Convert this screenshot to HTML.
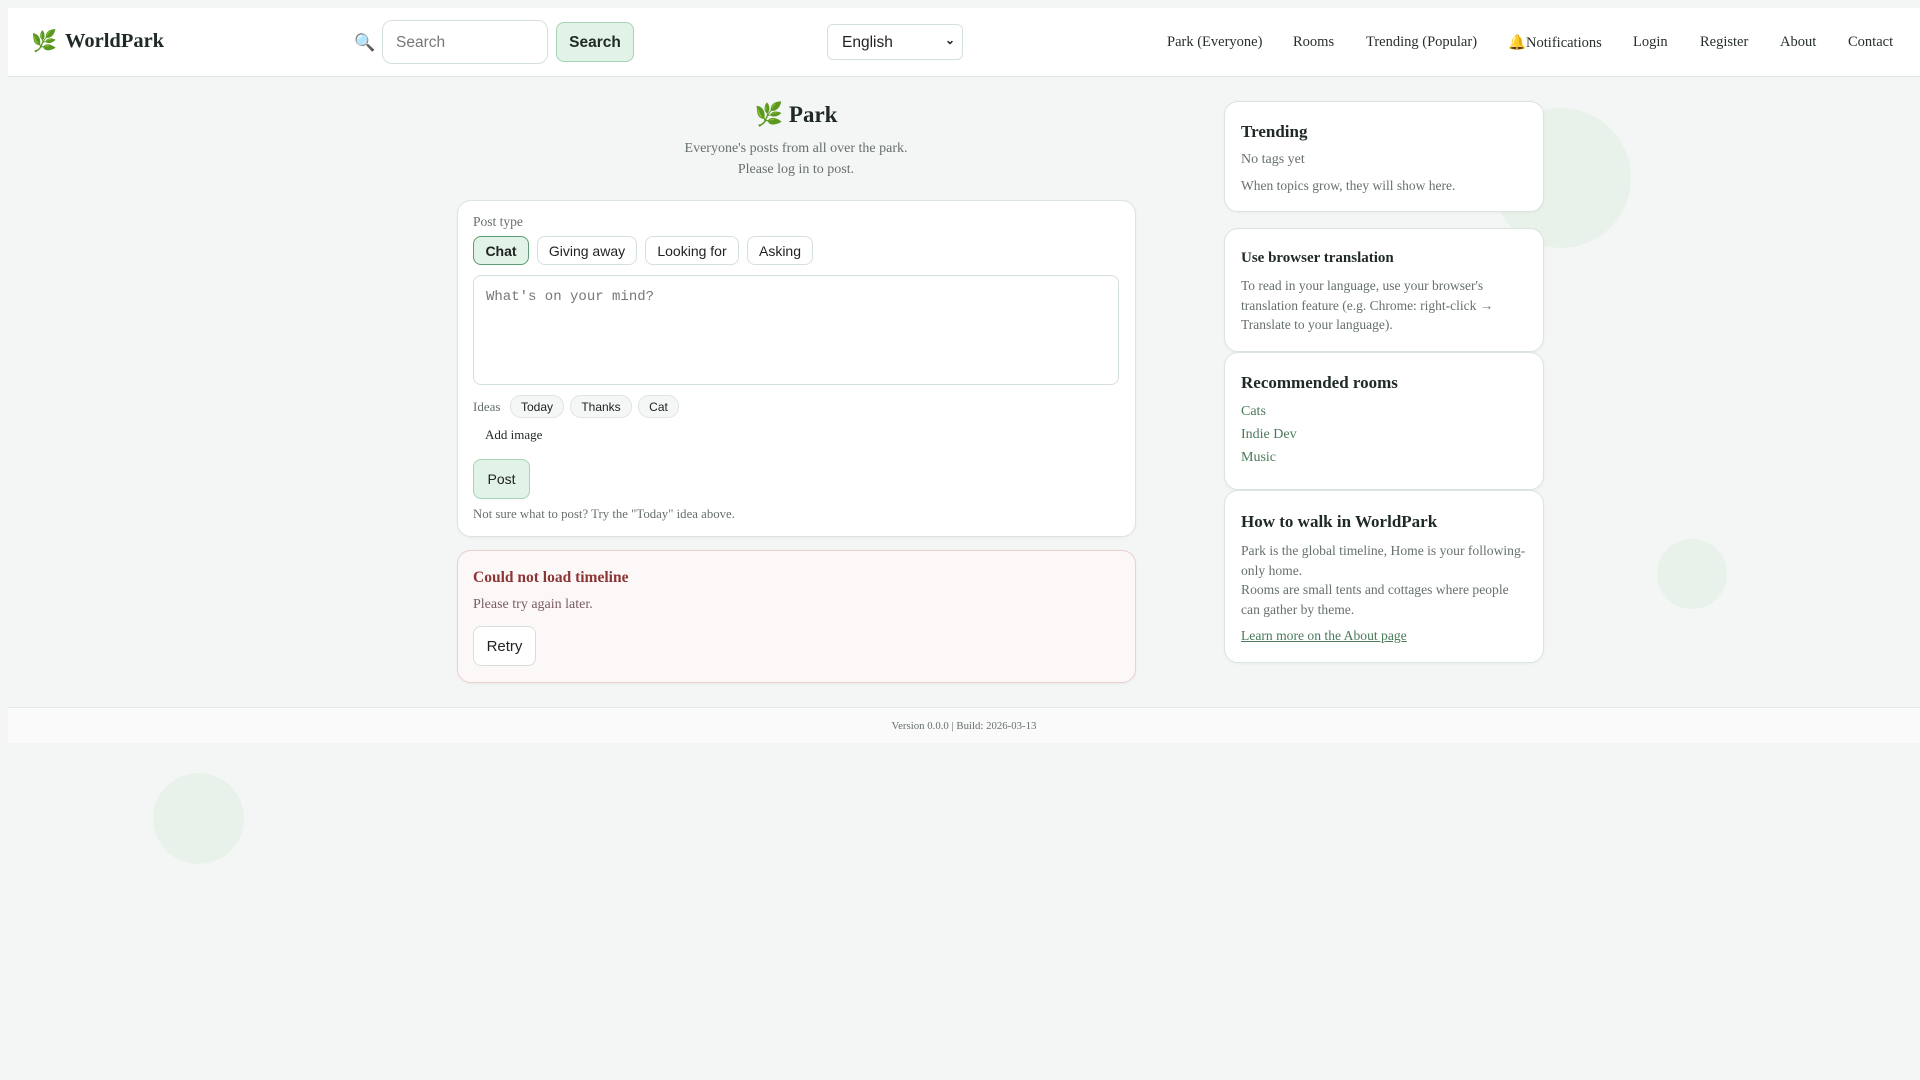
<!DOCTYPE html>
<html><head><meta charset="utf-8"><style>
*{box-sizing:border-box}
body{margin:0;width:1920px;height:1080px;background:#f4f6f5;font-family:"Liberation Serif",serif;color:#1f2a24;position:relative;overflow:hidden}
.a{position:absolute}
.circ{position:absolute;border-radius:50%;background:#e8f2ea}
header{position:absolute;left:8px;top:8px;width:1912px;height:69px;background:#fff;border-bottom:1px solid #dde5e1}
.nav{position:absolute;top:34px;font-size:14.5px;color:#26302b;white-space:nowrap}
.card{position:absolute;background:#fff;border:1px solid #dbe4df;border-radius:14px;box-shadow:0 1px 3px rgba(0,0,0,.04)}
.sans{font-family:"Liberation Sans",sans-serif}
.btn{position:absolute;border:1px solid #d6e0db;border-radius:8px;background:#fff;font-family:"Liberation Sans",sans-serif;font-size:14px;display:flex;align-items:center;justify-content:center;color:#222}
.chip{position:absolute;border:1px solid #dfe5e2;border-radius:11px;background:#f5f7f6;font-family:"Liberation Sans",sans-serif;font-size:12px;display:flex;align-items:center;justify-content:center;color:#222;height:23px;top:395px}
.muted{color:#66706b}
.link{color:#4a7a5a}
</style></head><body>
<div class="circ" style="left:1491px;top:108px;width:140px;height:140px"></div>
<div class="circ" style="left:1657px;top:539px;width:70px;height:70px"></div>
<div class="circ" style="left:153px;top:773px;width:91px;height:91px"></div>

<header></header>
<div class="a" style="left:31px;top:29px;font-size:21px">🌿</div>
<div class="a" style="left:65px;top:30px;font-size:20.5px;font-weight:bold;color:#1f2a24">WorldPark</div>
<div class="a" style="left:354px;top:33px;font-size:17px">🔍</div>
<div class="a sans" style="left:382px;top:20px;width:166px;height:44px;border:1px solid #d6e0db;border-radius:10px;background:#fff;font-size:15.5px;color:#777;padding:13px 13px">Search</div>
<div class="a sans" style="left:556px;top:22px;width:78px;height:40px;border:1px solid #a9d3b5;border-radius:8px;background:#e0f3e6;font-size:15.5px;font-weight:bold;display:flex;align-items:center;justify-content:center;color:#1f2a24;padding-top:2px">Search</div>
<div class="a sans" style="left:827px;top:24px;width:136px;height:36px;border:1px solid #d6e0db;border-radius:6px;background:#fff;font-size:15.5px;padding:9px 14px;color:#222">English<span style="position:absolute;right:7px;top:8px;font-size:12px;font-weight:bold">&#8964;</span></div>
<div class="nav" style="left:1167px">Park (Everyone)</div>
<div class="nav" style="left:1293px">Rooms</div>
<div class="nav" style="left:1366px">Trending (Popular)</div>
<div class="nav" style="left:1508px">🔔Notifications</div>
<div class="nav" style="left:1633px">Login</div>
<div class="nav" style="left:1700px">Register</div>
<div class="nav" style="left:1780px">About</div>
<div class="nav" style="left:1848px">Contact</div>

<div class="a" style="left:457px;width:678px;top:101px;text-align:center;font-size:23px;font-weight:bold">🌿 Park</div>
<div class="a muted" style="left:457px;width:678px;top:138px;text-align:center;font-size:14px;line-height:21px">Everyone's posts from all over the park.<br>Please log in to post.</div>

<div class="card" style="left:457px;top:200px;width:679px;height:337px"></div>
<div class="a muted" style="left:473px;top:214px;font-size:13.5px">Post type</div>
<div class="btn" style="left:473px;top:236px;width:56px;height:29px;background:#e0f3e6;border-color:#5f9a72;font-weight:bold">Chat</div>
<div class="btn" style="left:537px;top:236px;width:100px;height:29px">Giving away</div>
<div class="btn" style="left:645px;top:236px;width:94px;height:29px">Looking for</div>
<div class="btn" style="left:747px;top:236px;width:66px;height:29px">Asking</div>
<div class="a" style="left:473px;top:275px;width:646px;height:110px;border:1px solid #d6e0db;border-radius:8px;background:#fff;font-family:'Liberation Mono',monospace;font-size:14px;color:#777;padding:13px 12px">What's on your mind?</div>
<div class="a muted" style="left:473px;top:399px;font-size:13px">Ideas</div>
<div class="chip" style="left:510px;width:54px">Today</div>
<div class="chip" style="left:570px;width:62px">Thanks</div>
<div class="chip" style="left:638px;width:41px">Cat</div>
<div class="a" style="left:485px;top:427px;font-size:13px">Add image</div>
<div class="btn" style="left:473px;top:459px;width:57px;height:40px;background:#e0f3e6;border-color:#a9d3b5;font-size:14px">Post</div>
<div class="a muted" style="left:473px;top:507px;font-size:12.8px">Not sure what to post? Try the "Today" idea above.</div>

<div class="card" style="left:457px;top:550px;width:679px;height:133px;background:#fdf8f8;border-color:#ebcfd1"></div>
<div class="a" style="left:473px;top:569px;font-size:15.5px;font-weight:bold;color:#8b3535">Could not load timeline</div>
<div class="a" style="left:473px;top:597px;font-size:14px;color:#7a5c60">Please try again later.</div>
<div class="btn" style="left:473px;top:626px;width:63px;height:40px;font-size:15px">Retry</div>

<div class="card" style="left:1224px;top:101px;width:320px;height:111px"></div>
<div class="a" style="left:1241px;top:122px;font-size:17px;font-weight:bold">Trending</div>
<div class="a muted" style="left:1241px;top:152px;font-size:14px">No tags yet</div>
<div class="a muted" style="left:1241px;top:178px;font-size:13.5px">When topics grow, they will show here.</div>

<div class="card" style="left:1224px;top:228px;width:320px;height:124px"></div>
<div class="a" style="left:1241px;top:250px;font-size:15px;font-weight:bold">Use browser translation</div>
<div class="a muted" style="left:1241px;top:276px;width:295px;font-size:13.5px;line-height:19.5px">To read in your language, use your browser's translation feature (e.g. Chrome: right-click → Translate to your language).</div>

<div class="card" style="left:1224px;top:352px;width:320px;height:138px"></div>
<div class="a" style="left:1241px;top:373px;font-size:17px;font-weight:bold">Recommended rooms</div>
<div class="a link" style="left:1241px;top:404px;font-size:14px">Cats</div>
<div class="a link" style="left:1241px;top:427px;font-size:14px">Indie Dev</div>
<div class="a link" style="left:1241px;top:450px;font-size:14px">Music</div>

<div class="card" style="left:1224px;top:490px;width:320px;height:173px"></div>
<div class="a" style="left:1241px;top:512px;font-size:17px;font-weight:bold">How to walk in WorldPark</div>
<div class="a muted" style="left:1241px;top:541px;white-space:nowrap;font-size:13.6px;line-height:19.5px">Park is the global timeline, Home is your following-<br>only home.<br>Rooms are small tents and cottages where people<br>can gather by theme.</div>
<div class="a link" style="left:1241px;top:628px;font-size:13.6px;text-decoration:underline">Learn more on the About page</div>

<div class="a" style="left:8px;top:707px;width:1912px;height:36px;background:#fafafa;border-top:1px solid #e4e9e6"></div>
<div class="a muted" style="left:8px;width:1912px;top:720px;text-align:center;font-size:10.8px">Version 0.0.0 | Build: 2026-03-13</div>
</body></html>
